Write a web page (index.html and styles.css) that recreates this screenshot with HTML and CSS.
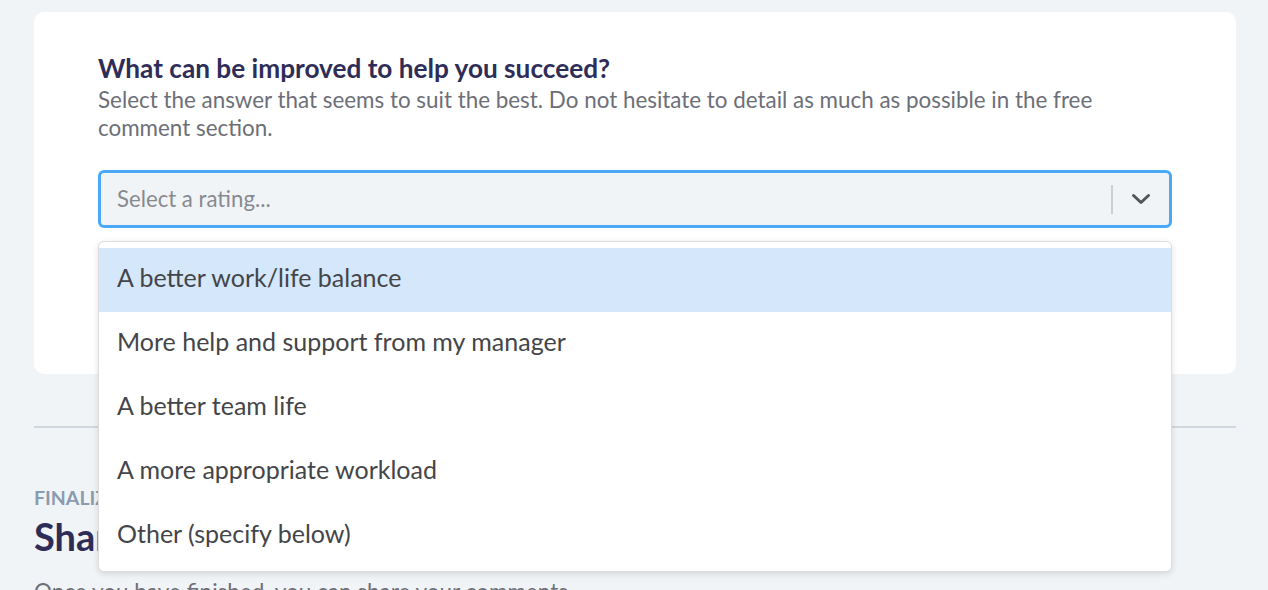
FILE: index.html
```html
<!DOCTYPE html>
<html lang="en">
<head>
<meta charset="utf-8">
<title>Survey</title>
<link rel="stylesheet" href="styles.css">
</head>
<body>
<main class="page">
  <section class="card">
    <h2 class="q-title">What can be improved to help you succeed?</h2>
    <p class="q-desc">Select the answer that seems to suit the best. Do not hesitate to detail as much as possible in the free comment section.</p>
    <div class="select-wrap">
      <div class="select">
        <span class="placeholder">Select a rating...</span>
        <span class="indicators">
          <span class="sep"></span>
          <svg class="chev" width="22" height="20" viewBox="0 0 22 20"><path d="M3.5 6.5 L11 13.5 L18.5 6.5" fill="none" stroke="#555" stroke-width="3" stroke-linecap="round" stroke-linejoin="round"/></svg>
        </span>
      </div>
      <ul class="menu">
        <li class="opt active">A better work/life balance</li>
        <li class="opt">More help and support from my manager</li>
        <li class="opt">A better team life</li>
        <li class="opt">A more appropriate workload</li>
        <li class="opt">Other (specify below)</li>
      </ul>
    </div>
  </section>
  <hr class="divider">
  <section class="finalize">
    <div class="eyebrow">Finalize</div>
    <h1 class="share-title">Share your feedback</h1>
    <p class="share-desc">Once you have finished, you can share your comments.</p>
  </section>
</main>
</body>
</html>
```

FILE: styles.css
```css
* { box-sizing: border-box; }
html, body { margin: 0; padding: 0; }
body {
  background: #f1f4f6;
  font-family: "Lato", "Open Sans", sans-serif;
  overflow: hidden;
}
.page {
  padding: 12px 32px 0 34px;
}
.card {
  background: #ffffff;
  border-radius: 10px;
  padding: 41px 64px 0 64px;
  height: 362px;
}
.q-title {
  margin: 0;
  font-size: 26.2px;
  font-weight: 700;
  color: #2e2d58;
  line-height: 30px;
}
.q-desc {
  margin: 3px 0 0;
  font-size: 22.4px;
  line-height: 28px;
  color: #6d6f78;
}
.select-wrap {
  position: relative;
  margin-top: 28px;
}
.select {
  height: 58px;
  border: 3px solid #4aa9f6;
  border-radius: 6px;
  background: #f1f4f6;
  display: flex;
  align-items: center;
  justify-content: space-between;
  padding: 0 17px 0 16px;
}
.placeholder {
  font-size: 22.2px;
  color: #878a90;
  padding-bottom: 2px;
}
.indicators {
  display: flex;
  align-items: center;
  gap: 17px;
}
.sep {
  width: 2px;
  height: 29px;
  background: #cfcfcf;
}
.chev { display: block; }
.menu {
  position: absolute;
  left: 0;
  right: 0;
  top: 71px;
  margin: 0;
  padding: 6px 0 3px;
  list-style: none;
  background: #fff;
  border: 1px solid #dedede;
  border-radius: 6px;
  box-shadow: 0 2px 6px rgba(0,0,0,0.12);
  z-index: 5;
}
.opt {
  height: 64px;
  display: flex;
  align-items: center;
  padding: 0 18px 6px;
  font-size: 25px;
  color: #444549;
}
.opt.active { background: #d4e7fb; }
.divider {
  margin: 52px 0 0;
  border: 0;
  border-top: 2px solid #d0d7de;
}
.finalize {
  padding-top: 60px;
}
.eyebrow {
  text-transform: uppercase;
  font-size: 19.5px;
  font-weight: 700;
  color: #8a9bb0;
  line-height: 20px;
}
.share-title {
  margin: 6px 0 0;
  font-size: 38px;
  font-weight: 700;
  color: #2e2d58;
  line-height: 44px;
}
.share-desc {
  margin: 20px 0 0;
  font-size: 22.5px;
  color: #6d6f78;
}
```
